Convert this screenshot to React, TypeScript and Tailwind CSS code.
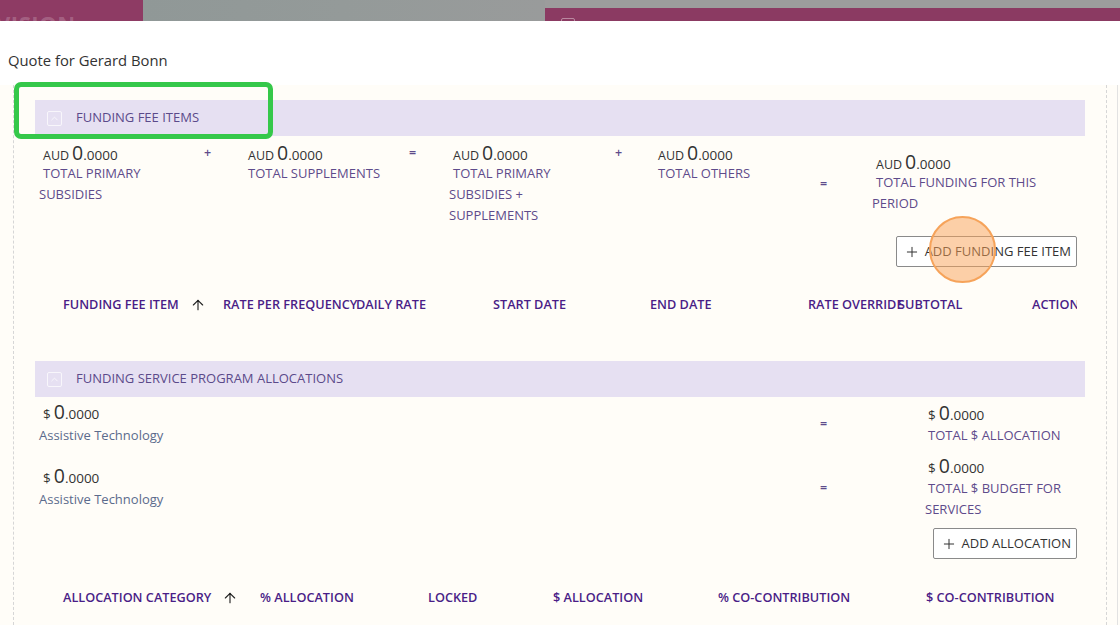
import { ArrowUp, ChevronUp, Plus } from "lucide-react";

const labelCls = "text-[13px] leading-[21px] text-[#5e4b8b] uppercase";
const headCls = "whitespace-nowrap text-[12.7px] font-semibold text-[#4a1d87]";

function Amount({ unit, small }: { unit: string; small?: boolean }) {
  return (
    <div className="flex h-[20px] items-baseline text-[#333]">
      <span className={small ? "text-[12.5px]" : "text-[13.5px]"}>{unit}</span>
      <span className="ml-[3px] text-[19.5px] leading-[20px]">0</span>
      <span className="text-[13.5px]">.0000</span>
    </div>
  );
}

function SectionHeader({ title }: { title: string }) {
  return (
    <div className="flex h-[36px] items-center bg-[#e6e0f2] pl-[12px]">
      <div className="flex h-[15px] w-[15px] items-center justify-center rounded-[2px] border border-white/70">
        <ChevronUp size={11} strokeWidth={1.5} className="text-white" />
      </div>
      <span className="ml-[14px] text-[13px] text-[#5b4a8a]">{title}</span>
    </div>
  );
}

// first line of a label sits a few pixels right of the wrapped lines
function Summary({ lines, className }: { lines: string[]; className?: string }) {
  return (
    <div className={className}>
      <div className="pl-[4px]">
        <Amount unit="AUD" small />
      </div>
      <div className={labelCls}>
        {lines.map((l, i) => (
          <div key={l} className={i === 0 ? "pl-[4px]" : ""}>
            {l}
          </div>
        ))}
      </div>
    </div>
  );
}

function Op({ sign, className }: { sign: string; className?: string }) {
  return (
    <div className={"text-[12.5px] font-semibold leading-[20px] text-[#5e4b8b] " + (className ?? "")}>
      {sign}
    </div>
  );
}

function AddButton({ label }: { label: string }) {
  return (
    <div className="flex justify-end pr-[8px]">
      <div className="flex h-[31px] items-center gap-[5px] rounded-[2px] border border-[#8a8a8a] bg-white pl-[7px] pr-[5px] text-[13px] text-[#333]">
        <Plus size={16} strokeWidth={1.5} />
        <span>{label}</span>
      </div>
    </div>
  );
}

function AllocRow({ right }: { right: string[] }) {
  return (
    <div className="flex items-center">
      <div className="w-[782px] pl-[4px]">
        <div className="pl-[4px]">
          <Amount unit="$" />
        </div>
        <div className="mt-[2px] text-[13px] leading-[22px] text-[#5b6b8c]">Assistive Technology</div>
      </div>
      <Op sign="=" className="w-[108px] pl-[3px]" />
      <div className="w-[152px]">
        <div className="pl-[3px]">
          <Amount unit="$" />
        </div>
        <div className={labelCls + " mt-[2px]"}>
          {right.map((l, i) => (
            <div key={l} className={i === 0 ? "pl-[3px]" : ""}>
              {l}
            </div>
          ))}
        </div>
      </div>
    </div>
  );
}

export default function App() {
  const feeCols: [string, string, boolean?][] = [
    ["FUNDING FEE ITEM", "w-[160px]", true],
    ["RATE PER FREQUENCY", "w-[133px]"],
    ["DAILY RATE", "w-[137px]"],
    ["START DATE", "w-[157px]"],
    ["END DATE", "w-[158px]"],
    ["RATE OVERRIDE", "w-[90px]"],
    ["SUBTOTAL", "w-[134px]"],
    ["ACTION", "w-[80px]"],
  ];
  const allocCols: [string, string, boolean?][] = [
    ["ALLOCATION CATEGORY", "w-[197px]", true],
    ["% ALLOCATION", "w-[168px]"],
    ["LOCKED", "w-[125px]"],
    ["$ ALLOCATION", "w-[165px]"],
    ["% CO-CONTRIBUTION", "w-[208px]"],
    ["$ CO-CONTRIBUTION", "w-[150px]"],
  ];

  const headRow = (cols: [string, string, boolean?][]) => (
    <div className="mr-[8px] flex h-[20px] items-center overflow-hidden pl-[28px]">
      {cols.map(([t, w, sort]) => (
        <div key={t} className={"relative flex shrink-0 items-center " + w}>
          <span className={headCls}>{t}</span>
          {sort && <ArrowUp size={16} strokeWidth={1.7} className="ml-[11px] text-[#222]" />}
        </div>
      ))}
    </div>
  );

  return (
    <div className="relative h-[625px] w-[1120px] overflow-hidden bg-white font-['Open_Sans',sans-serif]">
      {/* backdrop strip */}
      <div className="flex h-[21px]">
        <div className="relative w-[143px] overflow-hidden bg-[#8e3b64]">
          <span className="absolute left-[-4px] top-[12px] text-[22px] font-bold leading-[22px] tracking-wide text-white/20">
            VISION
          </span>
        </div>
        <div className="w-[402px] bg-gradient-to-r from-[#909897] via-[#949a99] to-[#999b9b]" />
        <div className="flex flex-1 flex-col bg-[#9c9c9c]">
          <div className="h-[8px]" />
          <div className="relative flex-1 bg-[#8b3a62]">
            <div className="absolute left-[16px] top-[10px] h-[8px] w-[14px] rounded-[2px] border border-white/40" />
          </div>
        </div>
      </div>

      {/* modal */}
      <div className="flex h-[64px] items-start pl-[8px] pt-[29px]">
        <span className="text-[14.8px] leading-[20px] text-[#333]">Quote for Gerard Bonn</span>
      </div>

      <div className="flex h-[540px] bg-[#fffdf8]">
        <div className="w-[13px]" />
        <div className="w-[1094px] border-x border-dashed border-[#d6d6d6] px-[21px] pt-[15px]">
          <SectionHeader title="FUNDING FEE ITEMS" />

          <div className="mt-[7px] flex items-start">
            <Summary lines={["TOTAL PRIMARY", "SUBSIDIES"]} className="w-[160px] pl-[4px]" />
            <Op sign="+" className="w-[49px] pl-[9px]" />
            <Summary lines={["TOTAL SUPPLEMENTS"]} className="w-[156px]" />
            <Op sign="=" className="w-[45px] pl-[9px]" />
            <Summary lines={["TOTAL PRIMARY", "SUBSIDIES +", "SUPPLEMENTS"]} className="w-[161px] pl-[4px]" />
            <Op sign="+" className="w-[48px] pl-[9px]" />
            <Summary lines={["TOTAL OTHERS"]} className="w-[157px]" />
            <Op sign="=" className="mt-[31px] w-[57px] pl-[9px]" />
            <Summary lines={["TOTAL FUNDING FOR THIS", "PERIOD"]} className="mt-[9px] w-[178px] pl-[4px]" />
          </div>

          <div className="mt-[10px]">
            <AddButton label="ADD FUNDING FEE ITEM" />
          </div>

          <div className="mt-[28px]">{headRow(feeCols)}</div>

          <div className="mt-[46px]">
            <SectionHeader title="FUNDING SERVICE PROGRAM ALLOCATIONS" />
          </div>

          <div className="mt-[5px] flex flex-col gap-[10px]">
            <AllocRow right={["TOTAL $ ALLOCATION"]} />
            <AllocRow right={["TOTAL $ BUDGET FOR", "SERVICES"]} />
          </div>

          <div className="mt-[8px]">
            <AddButton label="ADD ALLOCATION" />
          </div>

          <div className="mt-[29px]">{headRow(allocCols)}</div>
        </div>
        <div className="w-[10px]" />
        <div className="w-px bg-[#e2e2e2]" />
      </div>

      {/* annotations */}
      <div className="absolute left-[14px] top-[82px] h-[57px] w-[259px] rounded-[7px] border-[5px] border-[#35c84a]" />
      <div className="absolute left-[929px] top-[216px] h-[67px] w-[67px] rounded-full border-2 border-[#f6a35a] bg-[#f9a256]/50" />
    </div>
  );
}
